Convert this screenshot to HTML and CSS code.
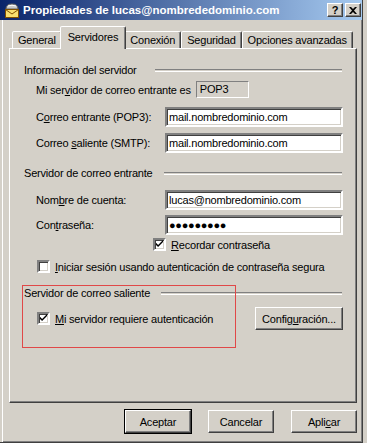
FILE: index.html
```html
<!DOCTYPE html>
<html lang="es">
<head>
  <meta charset="UTF-8">
  <meta name="viewport" content="width=device-width, initial-scale=1.0">
  <title>Propiedades de lucas@nombrededominio.com</title>
  <link rel="stylesheet" href="styles.css">
</head>
<body>
  <div class="window">
    <!-- Title bar -->
    <div class="titlebar">
      <svg class="app-icon" width="16" height="16" viewBox="0 0 16 16">
        <path d="M2 7 Q2 2 8 2 Q14 2 14 7 Z" fill="#c8c8c8" stroke="#606060" stroke-width="1"/>
        <path d="M4 4 Q8 2.5 12 4" fill="none" stroke="#ffffff" stroke-width="1"/>
        <rect x="1.5" y="7.5" width="13" height="8" fill="#f8e070" stroke="#805000"/>
        <path d="M1.5 7.5 L8 12 L14.5 7.5" fill="none" stroke="#805000"/>
      </svg>
      <span class="title">Propiedades de lucas@nombrededominio.com</span>
      <div class="caption-buttons">
        <div class="caption-btn help">?</div>
        <div class="caption-btn">
          <svg width="8" height="7" viewBox="0 0 8 7">
            <path d="M0 0h2l2 2 2-2h2L5 3.5 8 7H6L4 5 2 7H0l3-3.5z" fill="#000"/>
          </svg>
        </div>
      </div>
    </div>

    <div class="content">
      <!-- Tabs -->
      <div class="tabs">
        <div class="tab">General</div>
        <div class="tab active">Servidores</div>
        <div class="tab">Conexión</div>
        <div class="tab">Seguridad</div>
        <div class="tab">Opciones avanzadas</div>
      </div>

      <div class="panel">
        <section class="group">
          <div class="group-head wide"><span>Información del servidor</span><div class="etch"></div></div>
          <div class="row">
            <span>Mi ser<u>v</u>idor de correo entrante es</span>
            <div class="static-box">POP3</div>
          </div>
          <div class="form-row">
            <span>C<u>o</u>rreo entrante (POP3):</span>
            <div class="field">mail.nombredominio.com</div>
          </div>
          <div class="form-row">
            <span>Correo <u>s</u>aliente (SMTP):</span>
            <div class="field">mail.nombredominio.com</div>
          </div>
        </section>

        <section class="group">
          <div class="group-head"><span>Servidor de correo entrante</span><div class="etch"></div></div>
          <div class="form-row">
            <span>Nom<u>b</u>re de cuenta:</span>
            <div class="field">lucas@nombredominio.com</div>
          </div>
          <div class="form-row tight">
            <span>Con<u>t</u>raseña:</span>
            <div class="field password">●●●●●●●●●</div>
          </div>
          <label class="check remember">
            <span class="box checked"></span>
            <span><u>R</u>ecordar contraseña</span>
          </label>
          <label class="check spa">
            <span class="box"></span>
            <span><u>I</u>niciar sesión usando autenticación de contraseña segura</span>
          </label>
        </section>

        <section class="group">
          <div class="group-head"><span>Servidor de correo saliente</span><div class="etch"></div></div>
          <div class="auth-row">
            <label class="check">
              <span class="box checked"></span>
              <span><u>M</u>i servidor requiere autenticación</span>
            </label>
            <div class="button config">Config<u>u</u>ración...</div>
          </div>
        </section>

        <!-- Red annotation frame -->
        <div class="highlight"></div>
      </div>

      <div class="actions">
        <div class="button default">Aceptar</div>
        <div class="button">Cancelar</div>
        <div class="button">Apli<u>c</u>ar</div>
      </div>
    </div>
  </div>
</body>
</html>
```

FILE: styles.css
```css
body {
  margin: 0;
  background: #d4d0c8;
  font-family: 'Liberation Sans', Arial, sans-serif;
  font-size: 11px;
  letter-spacing: -0.2px;
  color: #000;
}

u {
  text-decoration: underline;
  text-underline-offset: 1px;
}

.window {
  width: 362px;
  height: 442px;
  background: #d4d0c8;
  border-right: 1px solid #404040;
  border-bottom: 1px solid #404040;
  box-shadow: inset 2px 0 0 #d4d0c8, inset 3px 0 0 #fff, inset -1px -1px 0 #808080;
  display: flex;
  flex-direction: column;
}

/* Title bar */
.titlebar {
  height: 20px;
  display: flex;
  align-items: center;
  padding: 0 1px 0 4px;
  background: linear-gradient(to right, #0a246a, #a6caf0);
  color: #fff;
}

.app-icon {
  flex: none;
  margin-right: 3px;
}

.title {
  flex: 1;
  font-weight: bold;
  font-size: 11.5px;
  letter-spacing: 0;
  white-space: nowrap;
}

.caption-buttons {
  display: flex;
  gap: 2px;
}

.caption-btn {
  width: 14px;
  height: 12px;
  background: #d4d0c8;
  border: 1px solid;
  border-color: #fff #404040 #404040 #fff;
  box-shadow: inset -1px -1px 0 #808080;
  display: flex;
  align-items: center;
  justify-content: center;
  color: #000;
}

.caption-btn.help {
  font-weight: bold;
  font-size: 11px;
  line-height: 12px;
}

/* Body */
.content {
  flex: 1;
  padding: 8px 5px 0 9px;
  display: flex;
  flex-direction: column;
}

.tabs {
  display: flex;
  align-items: flex-end;
  height: 21px;
  padding-left: 3px;
  position: relative;
  z-index: 1;
  margin-bottom: -1px;
}

.tab {
  height: 16px;
  padding: 0 5px;
  display: flex;
  align-items: center;
  white-space: nowrap;
  border: 1px solid;
  border-bottom: none;
  border-color: #fff #404040 transparent #fff;
  box-shadow: inset -1px 0 0 #808080;
  border-radius: 2px 2px 0 0;
  background: #d4d0c8;
  margin-bottom: 1px;
}

.tab.active {
  height: 20px;
  padding: 0 7px 2px;
  margin: 0 -2px;
  margin-bottom: 0;
  z-index: 2;
}

.panel {
  position: relative;
  height: 355px;
  border: 1px solid;
  border-color: #fff #404040 #404040 #fff;
  box-shadow: inset -1px -1px 0 #808080;
  padding: 13px 13px 0 14px;
  box-sizing: border-box;
}

.group-head {
  display: flex;
  align-items: center;
  gap: 11px;
  height: 16px;
}

.group-head.wide {
  gap: 18px;
}

.etch {
  flex: 1;
  height: 1px;
  border-top: 1px solid #808080;
  border-bottom: 1px solid #fff;
  margin-right: 1px;
}

.row {
  display: flex;
  align-items: center;
  gap: 5px;
  margin: 3px 0 0 12px;
  height: 17px;
}

.static-box {
  width: 48px;
  height: 15px;
  border: 1px solid;
  border-color: #808080 #fff #fff #808080;
  padding-left: 3px;
  line-height: 15px;
}

.form-row {
  display: grid;
  grid-template-columns: 129px 1fr;
  align-items: center;
  margin: 9px 0 0 12px;
}

.form-row + .form-row {
  margin-top: 6px;
}

.form-row.tight {
  margin-top: 5px;
}

.field {
  height: 16px;
  background: #fff;
  border: 2px solid;
  border-color: #808080 #fff #fff #808080;
  box-shadow: inset 1px 1px 0 #404040, inset -1px -1px 0 #d4d0c8;
  padding: 0 2px;
  line-height: 16px;
}

.field.password {
  font-size: 11px;
  letter-spacing: -0.3px;
}

.group + .group {
  margin-top: 12px;
}

.group:nth-of-type(3) {
  margin-top: 12px;
}

/* Checkboxes */
.check {
  display: flex;
  align-items: center;
  gap: 5px;
}

.check.remember {
  margin: 3px 0 0 129px;
}

.check.spa {
  margin: 9px 0 0 13px;
}

.box {
  width: 9px;
  height: 9px;
  background: #fff;
  border: 2px solid;
  border-color: #808080 #fff #fff #808080;
  box-shadow: inset 1px 1px 0 #404040, inset -1px -1px 0 #d4d0c8;
  flex: none;
  position: relative;
}

.box.checked::after {
  content: "";
  position: absolute;
  left: 1px;
  top: 0;
  width: 7px;
  height: 7px;
  background: #000;
  clip-path: polygon(0 40%, 30% 70%, 100% 0, 100% 30%, 30% 100%, 0 70%);
}

.auth-row {
  display: flex;
  align-items: center;
  justify-content: space-between;
  margin: 6px 0 0 13px;
}

/* Buttons */
.button {
  box-sizing: border-box;
  height: 23px;
  display: flex;
  align-items: center;
  justify-content: center;
  background: #d4d0c8;
  border: 1px solid;
  border-color: #fff #404040 #404040 #fff;
  box-shadow: inset -1px -1px 0 #808080;
}

.button.config {
  width: 88px;
}

.actions {
  display: flex;
  justify-content: flex-end;
  gap: 17px;
  padding-top: 7px;
}

.actions .button {
  width: 66px;
}

.button.default {
  outline: 1px solid #000;
}

.highlight {
  position: absolute;
  left: 12px;
  top: 236px;
  width: 212px;
  height: 61px;
  border: 1px solid #e04848;
  pointer-events: none;
}
```
